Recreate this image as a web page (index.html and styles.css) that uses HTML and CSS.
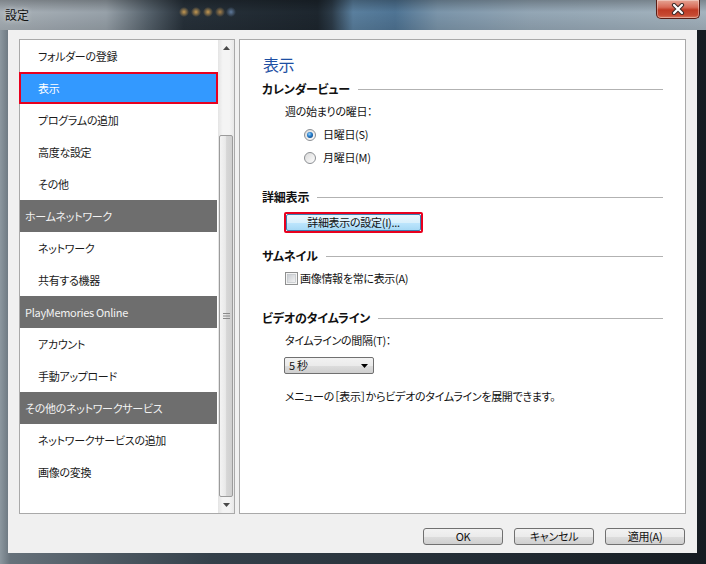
FILE: index.html
```html
<!DOCTYPE html>
<html lang="ja">

<head>
  <meta charset="UTF-8">
  <meta name="viewport" content="width=device-width, initial-scale=1.0">
  <title>設定</title>
  <link rel="stylesheet" href="styles.css">
</head>

<body>
  <div class="window">
    <!-- Title bar -->
    <div class="titlebar">
      <span class="title">設定</span>
      <button class="close-btn" aria-label="閉じる">
        <svg width="14" height="12" viewBox="0 0 14 12">
          <path d="M3 2 L11 10 M11 2 L3 10" stroke="#3b2a28" stroke-width="4.2" stroke-linecap="round" fill="none" />
          <path d="M3 2 L11 10 M11 2 L3 10" stroke="#ffffff" stroke-width="2.2" stroke-linecap="round" fill="none" />
        </svg>
      </button>
    </div>

    <div class="client">
      <div class="panes">
        <!-- Category list -->
        <div class="nav">
          <ul class="nav-list">
            <li class="nav-item">フォルダーの登録</li>
            <li class="nav-item selected">表示</li>
            <li class="nav-item">プログラムの追加</li>
            <li class="nav-item">高度な設定</li>
            <li class="nav-item">その他</li>
            <li class="nav-header">ホームネットワーク</li>
            <li class="nav-item">ネットワーク</li>
            <li class="nav-item">共有する機器</li>
            <li class="nav-header latin">PlayMemories Online</li>
            <li class="nav-item">アカウント</li>
            <li class="nav-item">手動アップロード</li>
            <li class="nav-header">その他のネットワークサービス</li>
            <li class="nav-item">ネットワークサービスの追加</li>
            <li class="nav-item">画像の変換</li>
          </ul>
          <div class="scrollbar">
            <div class="scroll-arrow">
              <svg width="7" height="4" viewBox="0 0 7 4"><path d="M0 4 L3.5 0 L7 4 Z" fill="#4a4a4a" /></svg>
            </div>
            <div class="scroll-track">
              <div class="scroll-thumb">
                <svg width="7" height="6" viewBox="0 0 7 6">
                  <path d="M0 0.5 H7 M0 3 H7 M0 5.5 H7" stroke="#8a8a8a" stroke-width="1" />
                </svg>
              </div>
            </div>
            <div class="scroll-arrow">
              <svg width="7" height="4" viewBox="0 0 7 4"><path d="M0 0 L7 0 L3.5 4 Z" fill="#4a4a4a" /></svg>
            </div>
          </div>
        </div>

        <!-- Settings page -->
        <div class="page">
          <h1 class="page-title">表示</h1>

          <div class="group-title">カレンダービュー</div>
          <div class="field">週の始まりの曜日：</div>
          <label class="option">
            <svg class="radio" width="12" height="12" viewBox="0 0 12 12">
              <defs>
                <linearGradient id="rbg" x1="0" y1="0" x2="1" y2="1">
                  <stop offset="0" stop-color="#d8d8d8" />
                  <stop offset="1" stop-color="#ffffff" />
                </linearGradient>
                <radialGradient id="rdot" cx="0.4" cy="0.35" r="0.7">
                  <stop offset="0" stop-color="#9fd4f8" />
                  <stop offset="0.5" stop-color="#2b82cf" />
                  <stop offset="1" stop-color="#0f4c8f" />
                </radialGradient>
              </defs>
              <circle cx="6" cy="6" r="5.5" fill="url(#rbg)" stroke="#8c8f93" />
              <circle cx="6" cy="6" r="3" fill="url(#rdot)" />
            </svg>
            日曜日(S)
          </label>
          <label class="option">
            <svg class="radio" width="12" height="12" viewBox="0 0 12 12">
              <circle cx="6" cy="6" r="5.5" fill="url(#rbg)" stroke="#8c8f93" />
            </svg>
            月曜日(M)
          </label>

          <div class="group-title gap-lg">詳細表示</div>
          <div class="field-block">
            <div class="focus-ring">
              <button class="detail-btn">詳細表示の設定(I)...</button>
            </div>
          </div>

          <div class="group-title gap-md">サムネイル</div>
          <label class="check">
            <svg width="13" height="13" viewBox="0 0 13 13">
              <defs>
                <linearGradient id="cbg" x1="0" y1="0" x2="1" y2="1">
                  <stop offset="0" stop-color="#c8ccd1" />
                  <stop offset="1" stop-color="#f4f4f4" />
                </linearGradient>
              </defs>
              <rect x="0.5" y="0.5" width="12" height="12" fill="#f4f4f4" stroke="#8e8f8f" />
              <rect x="2.5" y="2.5" width="8" height="8" fill="url(#cbg)" stroke="#b8bcc2" stroke-width="0.6" />
            </svg>
            画像情報を常に表示(A)
          </label>

          <div class="group-title gap-lg">ビデオのタイムライン</div>
          <div class="field">タイムラインの間隔(T)：</div>
          <div class="field-block">
            <div class="select">
              <span>5 秒</span>
              <svg width="7" height="4" viewBox="0 0 7 4"><path d="M0 0 L7 0 L3.5 4 Z" fill="#000" /></svg>
            </div>
          </div>
          <div class="field note">メニューの［表示］からビデオのタイムラインを展開できます。</div>
        </div>
      </div>

      <!-- Dialog buttons -->
      <div class="actions">
        <button class="button">OK</button>
        <button class="button">キャンセル</button>
        <button class="button">適用(A)</button>
      </div>
    </div>
  </div>
</body>

</html>
```

FILE: styles.css
```css
/* General body styling */
body {
  margin: 0;
  padding: 0;
  font-family: "Noto Sans CJK JP", "Noto Sans", sans-serif;
  font-size: 11px;
  letter-spacing: -0.3px;
  font-feature-settings: "palt";
  color: #111;
  overflow: hidden;
}

button {
  font-family: inherit;
  font-feature-settings: "palt";
  letter-spacing: -0.3px;
}

/* Window frame */
.window {
  width: 706px;
  height: 564px;
  display: flex;
  flex-direction: column;
  background: linear-gradient(to right, #8c979f 0, #66717a 1.5%, #34404a 30%, #222b33 70%, #161c22 100%);
}

.titlebar {
  height: 30px;
  flex: none;
  display: flex;
  justify-content: space-between;
  align-items: flex-start;
  background:
    radial-gradient(circle at 184px 12px, rgba(214, 164, 84, 0.9) 0, rgba(214, 164, 84, 0) 5px),
    radial-gradient(circle at 196px 12px, rgba(214, 164, 84, 0.9) 0, rgba(214, 164, 84, 0) 5px),
    radial-gradient(circle at 208px 12px, rgba(214, 164, 84, 0.9) 0, rgba(214, 164, 84, 0) 5px),
    radial-gradient(circle at 220px 12px, rgba(200, 150, 80, 0.8) 0, rgba(200, 150, 80, 0) 5px),
    radial-gradient(circle at 231px 12px, rgba(110, 140, 180, 0.8) 0, rgba(110, 140, 180, 0) 5px),
    linear-gradient(rgba(0, 0, 0, 0.25), rgba(0, 0, 0, 0) 40%, rgba(0, 0, 0, 0.1)),
    linear-gradient(to right, #a9b1b8 0, #97a1a9 15%, #56626c 21%, #27313a 26%, #1d262e 45%, #2c3b48 47%, #5a7f9e 50%, #4f7494 56%, #7b95aa 62%, #93a6b5 75%, #a4b3be 100%);
}

.title {
  padding: 7px 0 0 5px;
  font-size: 12px;
  line-height: 16px;
  letter-spacing: 0;
  color: #111;
  text-shadow: 0 0 5px rgba(255, 255, 255, 0.7);
}

.close-btn {
  width: 44px;
  height: 19px;
  margin-right: 6px;
  padding: 0;
  border: 1px solid #5a1d14;
  border-top: none;
  border-radius: 0 0 5px 5px;
  background: linear-gradient(#e6a595 0, #d86b58 40%, #bf3a24 55%, #c64a32 85%, #d97a60 100%);
  box-shadow: inset 0 0 0 1px rgba(255, 255, 255, 0.35);
  display: flex;
  align-items: center;
  justify-content: center;
  cursor: pointer;
}

/* Client area */
.client {
  flex: 1;
  margin: 0 9px 11px 8px;
  padding: 9px 11px 0 11px;
  background: #f0f0f0;
  display: flex;
  flex-direction: column;
}

.panes {
  display: flex;
  gap: 4px;
  height: 475px;
}

/* Left category list */
.nav {
  width: 216px;
  box-sizing: border-box;
  border: 1px solid #a9a9a9;
  background: #fff;
  display: flex;
}

.nav-list {
  width: 198px;
  list-style: none;
  margin: 0;
  padding: 0;
}

.nav-item,
.nav-header {
  height: 32px;
  line-height: 32px;
  white-space: nowrap;
}

.nav-item {
  padding-left: 18px;
  color: #1a1a1a;
}

.nav-item.selected {
  background: #3399ff;
  color: #fff;
  box-shadow: inset 0 0 0 2px #e8001e;
  margin-left: -1px;
  padding-left: 19px;
}

.nav-header {
  margin-right: 1px;
  padding-left: 5px;
  background: #6e6e6e;
  color: #f2f2f2;
}

/* Scrollbar */
.scrollbar {
  width: 16px;
  display: flex;
  flex-direction: column;
  background: linear-gradient(to right, #e4e4e4, #f4f4f4 30%, #f4f4f4 70%, #e8e8e8);
}

.scroll-arrow {
  height: 16px;
  flex: none;
  display: flex;
  align-items: center;
  justify-content: center;
}

.scroll-track {
  flex: 1;
  display: flex;
  flex-direction: column;
  justify-content: flex-end;
}

.scroll-thumb {
  height: 362px;
  margin: 0 1px;
  box-sizing: border-box;
  border: 1px solid #9b9b9b;
  border-radius: 2px;
  background: linear-gradient(to right, #f3f3f3, #e9e9e9 45%, #d6d6d6 55%, #cfcfcf);
  display: flex;
  align-items: center;
  justify-content: center;
}

/* Right settings page */
.page {
  width: 447px;
  box-sizing: border-box;
  border: 1px solid #a9a9a9;
  background: #fff;
  padding: 12px 22px 0 22px;
}

.page-title {
  margin: 0;
  padding-left: 1px;
  font-size: 16px;
  font-weight: normal;
  line-height: 24px;
  letter-spacing: -0.5px;
  color: #1d4fa3;
}

.group-title {
  display: flex;
  align-items: center;
  gap: 8px;
  margin-top: 3px;
  font-size: 12px;
  font-weight: bold;
  line-height: 20px;
  letter-spacing: -0.2px;
  white-space: nowrap;
}

.group-title::after {
  content: "";
  flex: 1;
  border-top: 1px solid #b2b2b2;
}

.group-title.gap-lg {
  margin-top: 18px;
}

.group-title.gap-md {
  margin-top: 13px;
}

.field {
  padding-left: 23px;
  line-height: 23px;
  margin-top: 1px;
}

.field.note {
  margin-top: 11px;
}

.field-block {
  padding-left: 22px;
  margin-top: 5px;
}

.option {
  display: flex;
  align-items: center;
  gap: 7px;
  padding-left: 42px;
  line-height: 23px;
}

.check {
  display: flex;
  align-items: center;
  gap: 2px;
  padding-left: 23px;
  margin-top: 1px;
  line-height: 23px;
}

/* Highlighted detail button */
.focus-ring {
  display: inline-flex;
  border: 2px solid #e8001e;
  border-radius: 2px;
}

.detail-btn {
  width: 135px;
  height: 17px;
  padding: 0;
  border: 1px solid #3c7fb1;
  border-radius: 2px;
  background: linear-gradient(#eaf6fd 0, #d9f0fc 50%, #bee6fd 51%, #a7d9f5 100%);
  font-size: 11px;
  line-height: 15px;
  color: #111;
}

/* Dropdown */
.select {
  width: 90px;
  height: 17px;
  box-sizing: border-box;
  border: 1px solid #707070;
  border-radius: 2px;
  background: linear-gradient(#f2f2f2, #ebebeb 50%, #dddddd 51%, #cfcfcf);
  display: flex;
  align-items: center;
  justify-content: space-between;
  padding: 0 5px 0 4px;
  line-height: 15px;
}

/* Dialog buttons */
.actions {
  display: flex;
  justify-content: flex-end;
  gap: 11px;
  margin-top: 14px;
  padding-right: 1px;
}

.button {
  width: 80px;
  height: 17px;
  padding: 0;
  border: 1px solid #707070;
  border-radius: 3px;
  background: linear-gradient(#f2f2f2 0, #ebebeb 50%, #dddddd 51%, #cfcfcf 100%);
  font-size: 11px;
  line-height: 15px;
  color: #111;
  cursor: pointer;
}
```
